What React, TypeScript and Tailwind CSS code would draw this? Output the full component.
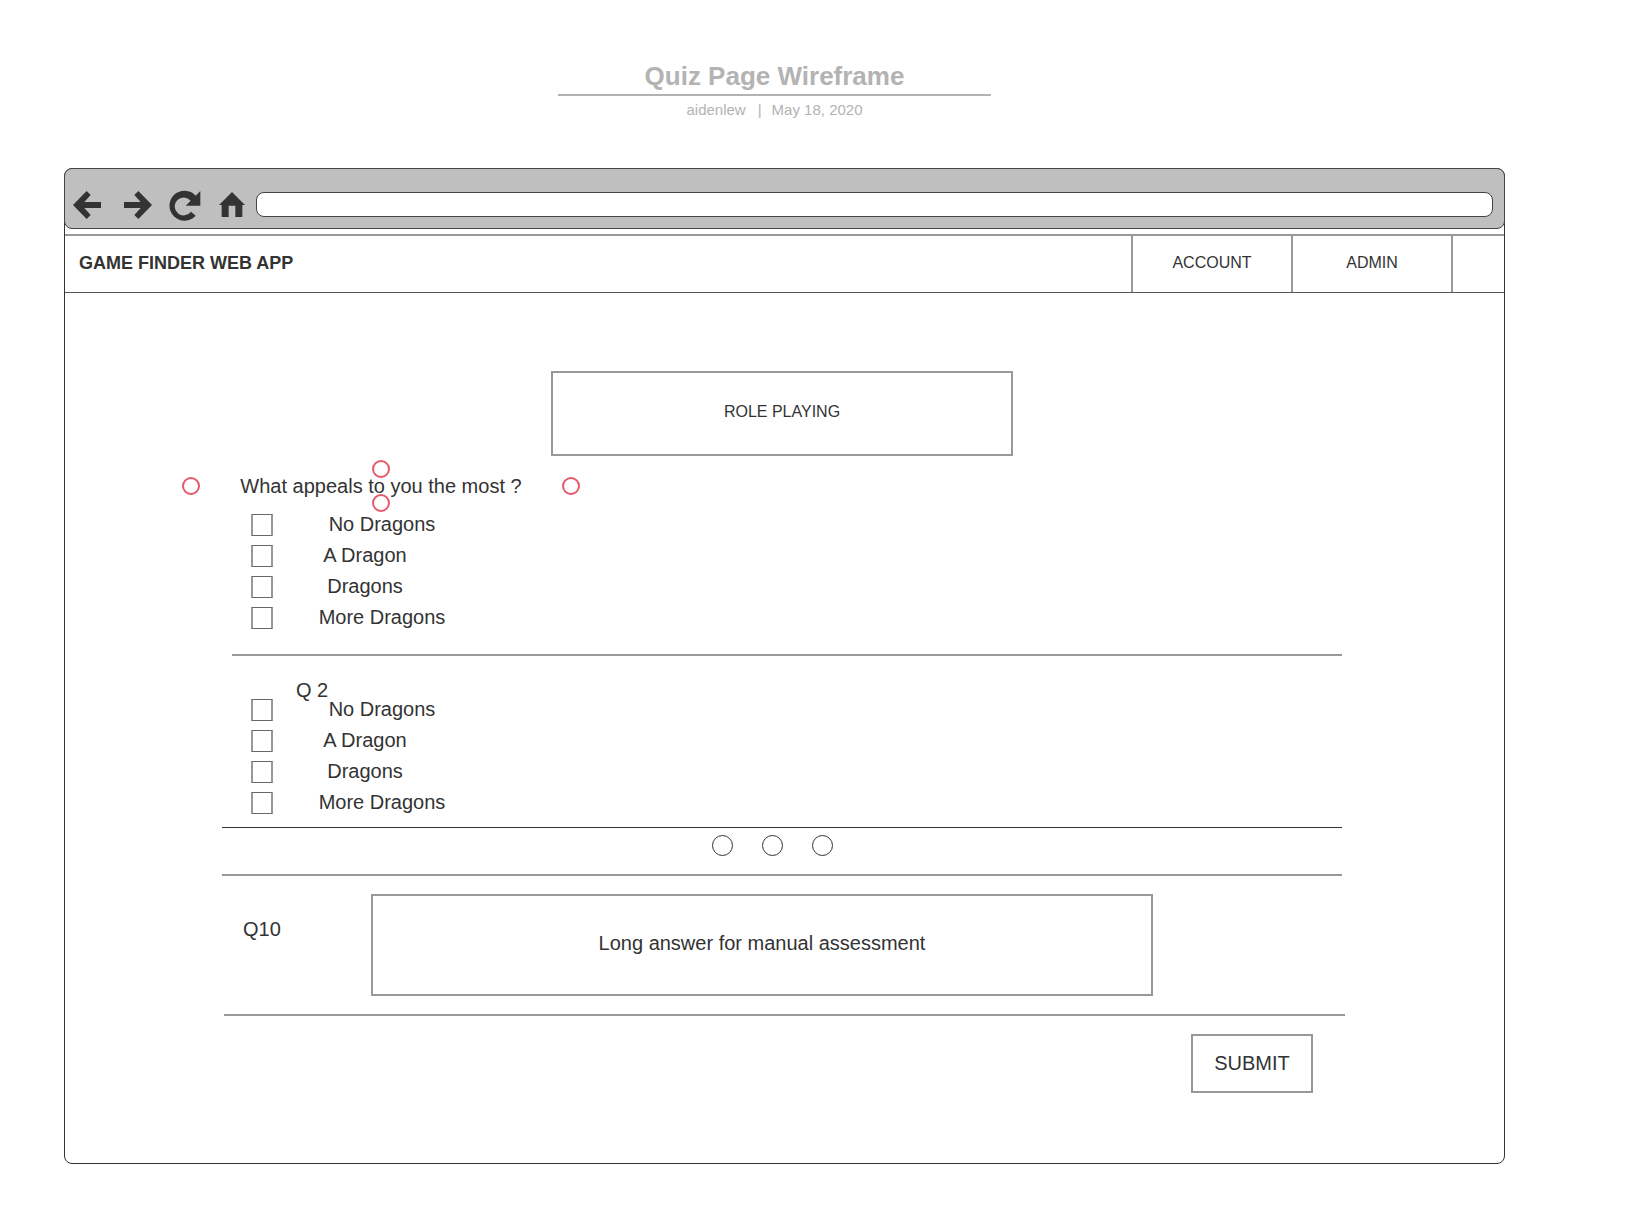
const options = [
  { label: 'No Dragons', wide: true },
  { label: 'A Dragon', wide: false },
  { label: 'Dragons', wide: false },
  { label: 'More Dragons', wide: true },
];

function Options({ name }: { name: string }) {
  return (
    <div className="ml-[29px] flex flex-col gap-[9px]">
      {options.map(({ label, wide }) => (
        <label key={label} className="flex h-[22px] items-start gap-[15px] leading-5">
          <input
            type="checkbox"
            name={name}
            className="size-[22px] shrink-0 appearance-none border-2 border-y border-[#999] border-y-[#666] bg-white checked:bg-[#333]"
          />
          <span className={wide ? 'w-[188px] text-center' : 'w-[154px] text-center'}>{label}</span>
        </label>
      ))}
    </div>
  );
}

function Handle({ className }: { className: string }) {
  return (
    <span
      className={`absolute size-[18px] -translate-x-1/2 -translate-y-1/2 rounded-full border-2 border-[#e5596a] ${className}`}
    />
  );
}

export default function App() {
  return (
    <div className="min-h-screen bg-white pt-[60px] pr-[127px] pb-16 pl-16 font-['Liberation_Sans',Arial,sans-serif] text-[#333]">
      <header className="flex flex-col items-center pr-5 text-[#b3b3b3]">
        <h1 className="w-[433px] border-b-2 border-[#b3b3b3] pb-0.5 text-center text-[26px] leading-8 font-bold">
          Quiz Page Wireframe
        </h1>
        <p className="flex gap-3 pt-1 text-[15px] leading-5">
          <span>aidenlew</span>
          <span className="-mr-0.5">|</span>
          <span>May 18, 2020</span>
        </p>
      </header>

      <div className="mt-12 rounded-lg border border-[#333]">
        <div className="-mx-px -mt-px flex h-[61px] items-center rounded-lg border border-[#444] bg-[#bfbfbf] pt-3 pr-[11px] pl-2">
          <button type="button" aria-label="Back" className="mr-[23px]">
            <svg viewBox="0 0 84 84" className="size-7" fill="#333">
              <path d="M0 42 41 0 53 12 34 33H84V51H34L53 72 41 84Z" />
            </svg>
          </button>
          <button type="button" aria-label="Forward" className="mr-[17px]">
            <svg viewBox="0 0 84 84" className="size-7" fill="#333">
              <path d="M84 42 43 0 31 12 50 33H0V51H50L31 72 43 84Z" />
            </svg>
          </button>
          <button type="button" aria-label="Reload" className="mr-[18px]">
            <svg viewBox="0 0 96 96" className="size-8" fill="#333">
              <path d="M94 6V50H50L65 35A27 27 0 1 0 66 68L80 80A45 45 0 1 1 80 20Z" />
            </svg>
          </button>
          <button type="button" aria-label="Home" className="mr-[11px]">
            <svg viewBox="0 0 78 75" className="h-[25px] w-[26px]" fill="#333">
              <path d="M39 0 78 39H70V75H49V41H29V75H8V39H0Z" />
            </svg>
          </button>
          <input
            type="text"
            aria-label="Address"
            className="h-[25px] min-w-0 flex-1 rounded-lg border border-[#444] bg-white px-2 text-[15px] outline-none"
          />
        </div>

        <nav className="mt-[5px] flex h-[59px] items-stretch border-t-2 border-b border-t-[#999] border-b-[#555]">
          <strong className="flex flex-1 items-center pb-px pl-[14px] text-[18px]">GAME FINDER WEB APP</strong>
          <a href="#account" className="flex w-40 items-center justify-center border-l-2 border-[#999] pb-0.5 text-[16px]">
            ACCOUNT
          </a>
          <a href="#admin" className="flex w-40 items-center justify-center border-l-2 border-[#999] pb-0.5 text-[16px]">
            ADMIN
          </a>
          <span className="w-[53px] border-l-2 border-[#999]" />
        </nav>

        <form className="pt-[78px] pr-[162px] pb-[70px] pl-[157px] text-[20px]" onSubmit={(e) => e.preventDefault()}>
          <h2 className="mx-auto flex h-[85px] w-[462px] items-center justify-center border-2 border-[#999] pb-1 text-[16px]">
            ROLE PLAYING
          </h2>

          <fieldset className="mt-[13px]">
            <legend className="relative mb-[11px] -ml-[31px] flex h-[34px] w-[380px] justify-center leading-[34px]">
              What appeals to you the most ?
              <Handle className="top-0 left-1/2" />
              <Handle className="top-full left-1/2" />
              <Handle className="top-1/2 left-0" />
              <Handle className="top-1/2 left-full" />
            </legend>
            <Options name="q1" />
          </fieldset>

          <hr className="mt-[25px] ml-[10px] border-t-2 border-[#999]" />

          <fieldset className="mt-[25px]">
            <legend className="ml-[74px] h-[18px] leading-[18px]">Q 2</legend>
            <Options name="q2" />
          </fieldset>

          <hr className="mt-[13px] border-[#333]" />
          <div className="flex justify-center gap-[29px] pt-[7px] pr-[19px] pb-[18px]">
            <span className="size-[21px] rounded-full border border-[#333]" />
            <span className="size-[21px] rounded-full border border-[#333]" />
            <span className="size-[21px] rounded-full border border-[#333]" />
          </div>
          <hr className="border-t-2 border-[#999]" />

          <div className="my-[18px] flex pr-[189px]">
            <label htmlFor="q10" className="w-[149px] pt-[25px] pl-[21px] leading-5">
              Q10
            </label>
            <textarea
              id="q10"
              placeholder="Long answer for manual assessment"
              className="h-[102px] min-w-0 flex-1 resize-none border-2 border-[#999] pt-[37px] text-center leading-5 outline-none placeholder:text-[#333]"
            />
          </div>

          <hr className="-mr-[3px] ml-[2px] border-t-2 border-[#999]" />

          <div className="mt-[18px] flex justify-end pr-[29px]">
            <button type="submit" className="h-[59px] w-[122px] border-2 border-[#999] pb-0.5">
              SUBMIT
            </button>
          </div>
        </form>
      </div>
    </div>
  );
}
